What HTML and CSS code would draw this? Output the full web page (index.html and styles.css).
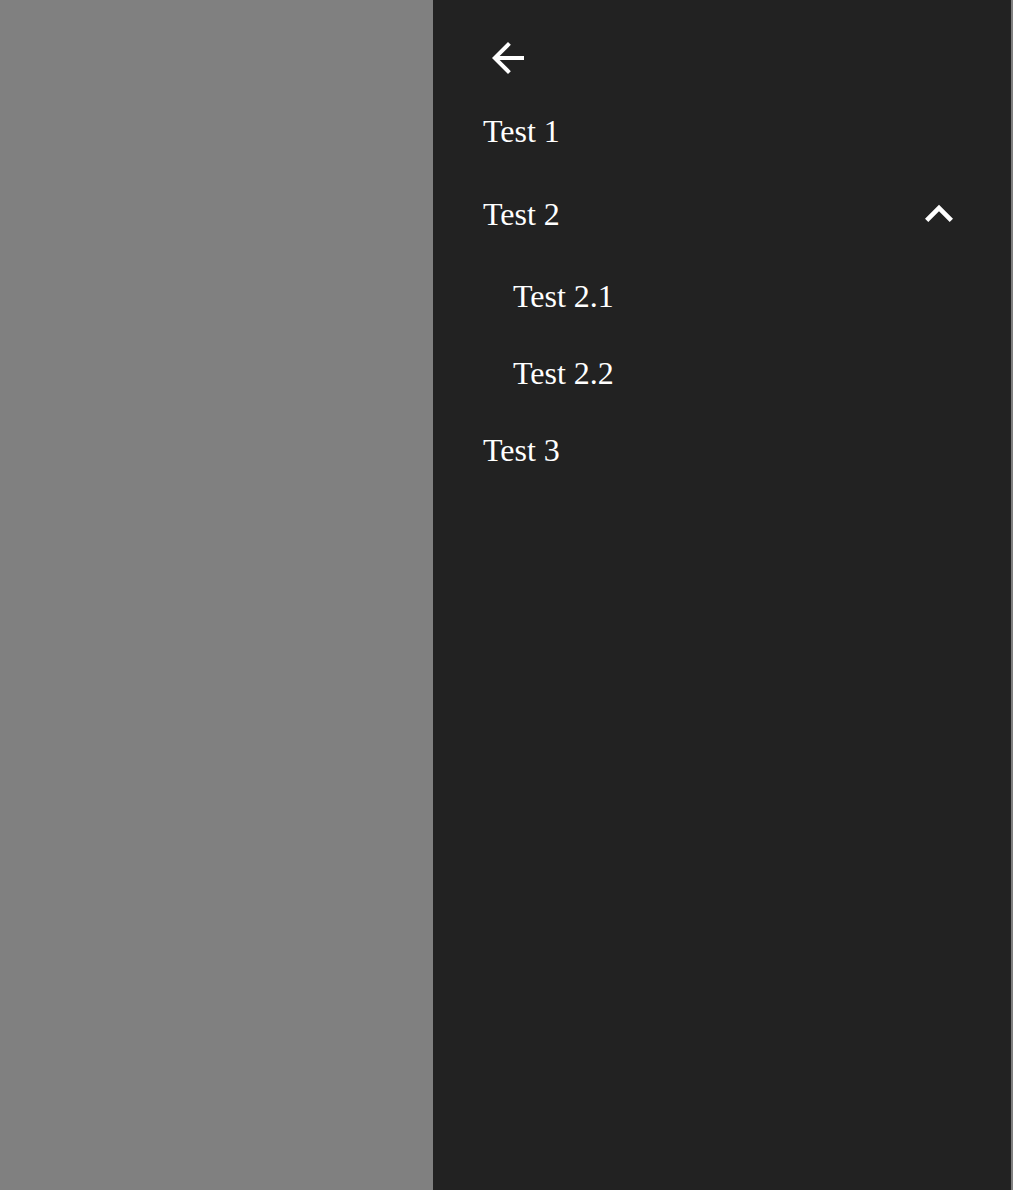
FILE: index.html
```html
<!DOCTYPE html>
<html>
<head>
<meta charset="utf-8">
<link rel="stylesheet" href="styles.css">
</head>
<body>
<div class="page">
  <div class="overlay"></div>
  <aside class="drawer">
    <div class="back">
      <svg class="back-icon" width="48" height="48" viewBox="0 0 24 24"><path d="M20 11H7.83l5.59-5.59L12 4l-8 8 8 8 1.41-1.41L7.83 13H20v-2z" fill="#fff"/></svg>
    </div>
    <nav class="menu">
      <div class="item item-first">Test 1</div>
      <div class="item item-group">
        <span>Test 2</span>
        <svg class="chev" width="56" height="56" viewBox="0 0 24 24"><path d="M12 8l-6 6 1.41 1.41L12 10.83l4.59 4.58L18 14z" fill="#fff"/></svg>
      </div>
      <div class="sub">
        <div class="subitem">Test 2.1</div>
        <div class="subitem">Test 2.2</div>
      </div>
      <div class="item">Test 3</div>
    </nav>
  </aside>
</div>
</body>
</html>
```
FILE: styles.css
```css
html, body {
  margin: 0;
  padding: 0;
  height: 100%;
  background: #808080;
}
.page {
  display: flex;
  height: 1190px;
  font-family: "Liberation Serif", "Times New Roman", serif;
  color: #fff;
}
.overlay {
  width: 433px;
  background: #808080;
}
.drawer {
  width: 578px;
  background: #222222;
  padding-left: 50px;
  box-sizing: border-box;
}
.back {
  padding-top: 34px;
  height: 48px;
}
.back-icon {
  display: block;
  margin-left: 1px;
}
.menu {
  display: flex;
  flex-direction: column;
  padding-top: 34px;
  font-size: 32px;
  line-height: 30px;
}
.item {
  height: 30px;
  margin-bottom: 53px;
}
.item-group {
  display: flex;
  justify-content: space-between;
  align-items: center;
  padding-right: 44px;
  margin-bottom: 52px;
}
.chev {
  margin: -13px 0;
  display: block;
}
.sub {
  display: flex;
  flex-direction: column;
  padding-left: 30px;
}
.subitem {
  height: 30px;
  margin-bottom: 47px;
}
```
